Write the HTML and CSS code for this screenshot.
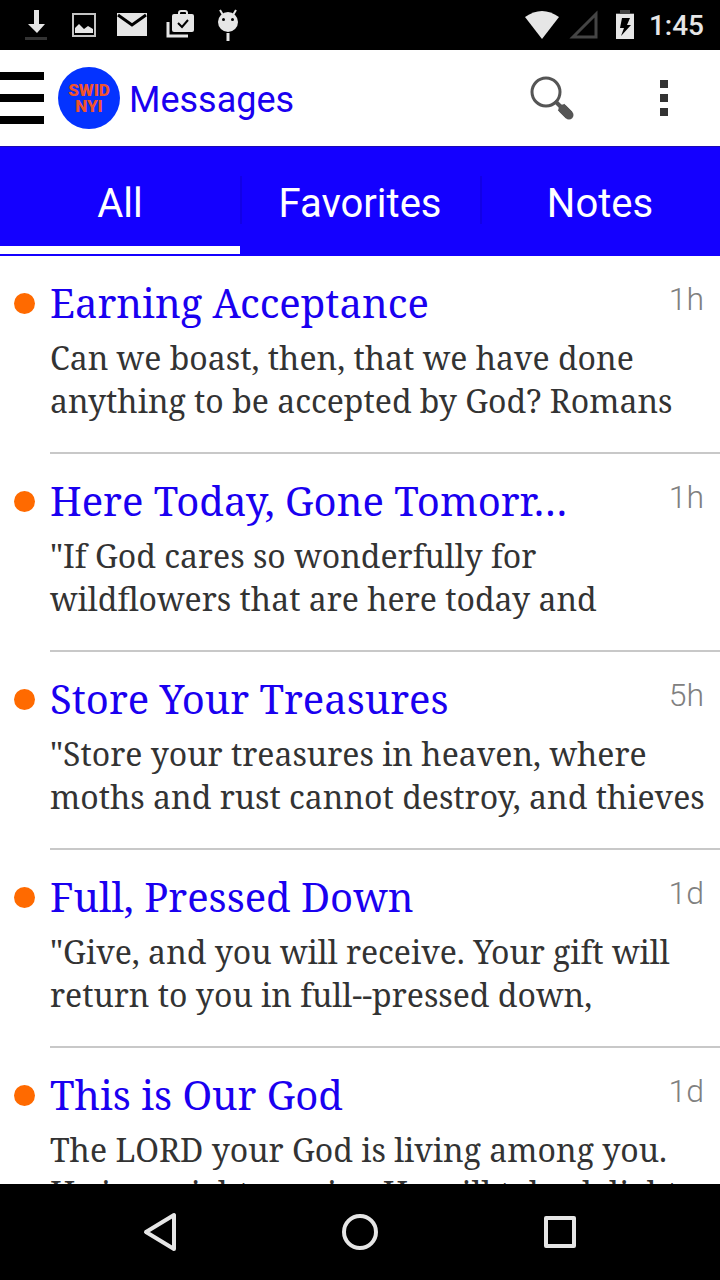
FILE: index.html
```html
<!DOCTYPE html>
<html lang="en">
<head>
  <meta charset="UTF-8">
  <meta name="viewport" content="width=device-width, initial-scale=1.0">
  <title>Messages</title>
  <link rel="stylesheet" href="styles.css">
</head>
<body>
  <div class="status-bar">
    <div class="status-icons">
      <!-- download -->
      <svg width="28" height="34" viewBox="0 0 28 34">
        <path fill="#e6e6e6" d="M10 2h5v14h6l-8 9-9-9h6z"/>
        <path fill="#333" d="M1 29h22v3H1z"/>
      </svg>
      <!-- screenshot -->
      <svg width="28" height="34" viewBox="0 0 28 34">
        <path fill="none" stroke="#c4c4c4" stroke-width="2" d="M3 6h22v22H3z"/>
        <path fill="#e6e6e6" d="M5 25v-5l4-4 5 5 4-3 5 3v4z"/>
      </svg>
      <!-- mail -->
      <svg width="32" height="34" viewBox="0 0 32 34">
        <path fill="#e6e6e6" d="M1 5h30v23H1z"/>
        <path fill="none" stroke="#000" stroke-width="3" d="M2 7l14 10L30 7"/>
      </svg>
      <!-- play store update -->
      <svg width="28" height="34" viewBox="0 0 28 34">
        <path fill="none" stroke="#e6e6e6" stroke-width="3" d="M2 14v14h20"/>
        <path fill="#e6e6e6" d="M8 6h18q2 0 2 2v14q0 2-2 2H8q-2 0-2-2V8q0-2 2-2z"/>
        <path fill="none" stroke="#e6e6e6" stroke-width="2" d="M13 7V5q0-2 2-2h4q2 0 2 2v2"/>
        <path fill="none" stroke="#000" stroke-width="2" d="M12 15l4 4 6-7"/>
      </svg>
      <!-- android debug -->
      <svg width="28" height="34" viewBox="-6 0 28 34">
        <circle fill="#e6e6e6" cx="10" cy="14" r="10"/>
        <path fill="none" stroke="#e6e6e6" stroke-width="2" d="M5 7L2 2M15 7l3-5"/>
        <path fill="none" stroke="#e6e6e6" stroke-width="3" d="M10 25v8"/>
        <circle cx="5.500" cy="11.500" r="1.500"/>
        <circle cx="14.500" cy="11.500" r="1.500"/>
      </svg>
    </div>
    <div class="status-system">
      <!-- wifi -->
      <svg width="36" height="34" viewBox="0 0 36 34">
        <path fill="#e6e6e6" d="M2 9Q19-3 36 9L19 31z"/>
      </svg>
      <!-- no signal -->
      <svg width="36" height="34" viewBox="0 0 36 34">
        <path fill="none" stroke="#444" stroke-width="3" d="M4 29L27 6v23z"/>
      </svg>
      <!-- battery -->
      <svg width="24" height="34" viewBox="0 0 24 34">
        <path fill="#444" d="M5 2h10v3h4v4H1V5h4z"/>
        <path fill="#e6e6e6" d="M1 6h18v25H1z"/>
        <path d="M7 10h8l-3 7h4L6 28l3-8H5z"/>
      </svg>
      <span class="clock">1:45</span>
    </div>
  </div>

  <header class="action-bar">
    <button class="menu-button" aria-label="Menu">
      <span></span>
      <span></span>
      <span></span>
    </button>
    <div class="logo">SWID<br>NYI</div>
    <h1>Messages</h1>
    <button class="icon-button" aria-label="Search">
      <svg width="48" height="48" viewBox="0 0 48 48">
        <circle cx="18" cy="18" r="14" fill="none" stroke="#555" stroke-width="3"/>
        <path stroke="#555" stroke-width="4" d="M27 27l6 6"/>
        <path stroke="#555" stroke-width="9" stroke-linecap="round" d="M35 35l6 6"/>
        <path stroke="#555" stroke-width="9" d="M33 33l8 8"/>
      </svg>
    </button>
    <button class="icon-button" aria-label="More options">
      <svg width="8" height="36" viewBox="0 0 8 36">
        <path fill="#333" d="M0 0h8v8H0zM0 14h8v8H0zM0 28h8v8H0z"/>
      </svg>
    </button>
  </header>

  <nav class="tabs">
    <button class="tab selected">All</button>
    <button class="tab">Favorites</button>
    <button class="tab">Notes</button>
  </nav>

  <main class="messages">
    <article class="message">
      <div class="message-header">
        <h2>Earning Acceptance</h2>
        <time>1h</time>
      </div>
      <p>Can we boast, then, that we have done<br>anything to be accepted by God? Romans</p>
    </article>
    <article class="message">
      <div class="message-header">
        <h2>Here Today, Gone Tomorr…</h2>
        <time>1h</time>
      </div>
      <p>"If God cares so wonderfully for<br>wildflowers that are here today and</p>
    </article>
    <article class="message">
      <div class="message-header">
        <h2>Store Your Treasures</h2>
        <time>5h</time>
      </div>
      <p>"Store your treasures in heaven, where<br>moths and rust cannot destroy, and thieves</p>
    </article>
    <article class="message">
      <div class="message-header">
        <h2>Full, Pressed Down</h2>
        <time>1d</time>
      </div>
      <p>"Give, and you will receive. Your gift will<br>return to you in full--pressed down,</p>
    </article>
    <article class="message">
      <div class="message-header">
        <h2>This is Our God</h2>
        <time>1d</time>
      </div>
      <p>The LORD your God is living among you.<br>He is a mighty savior. He will take delight</p>
    </article>
  </main>

  <div class="nav-bar">
    <button aria-label="Back">
      <svg width="40" height="40" viewBox="0 0 40 40">
        <path d="M34 3v34L6 20z"/>
      </svg>
    </button>
    <button aria-label="Home">
      <svg width="40" height="40" viewBox="0 0 40 40">
        <circle cx="20" cy="20" r="16"/>
      </svg>
    </button>
    <button aria-label="Recent apps">
      <svg width="40" height="40" viewBox="0 0 40 40">
        <path d="M6 6h28v28H6z"/>
      </svg>
    </button>
  </div>
</body>
</html>
```

FILE: styles.css
```css
:root {
  --blue: #1400ff;
  --title-blue: #1a00f0;
  --orange: #ff6a00;
  --icon-light: #e6e6e6;
  --serif: "Noto Serif", "Droid Serif", "DejaVu Serif Condensed", "DejaVu Serif", serif;
}

* {
  box-sizing: border-box;
}

body {
  display: flex;
  flex-direction: column;
  height: 100vh;
  margin: 0;
  background: #fff;
  font-family: Roboto, sans-serif;
}

h1, h2, p {
  margin: 0;
  font-weight: 400;
}

button {
  padding: 0;
  border: none;
  background: none;
  font-family: inherit;
  cursor: pointer;
}

svg {
  display: block;
}

/* Status bar */
.status-bar {
  display: flex;
  flex: none;
  justify-content: space-between;
  height: 50px;
  padding: 8px 16px 0 24px;
  background: #000;
}

.status-icons {
  display: flex;
  gap: 18px;
}

.status-system {
  display: flex;
  gap: 10px;
}

.clock {
  color: var(--icon-light);
  font-size: 28px;
  font-weight: 500;
  line-height: 36px;
}

/* Action bar */
.action-bar {
  display: flex;
  flex: none;
  align-items: center;
  height: 96px;
}

.menu-button {
  display: flex;
  flex-direction: column;
  gap: 14px;
  width: 44px;
  margin-right: 14px;
}

.menu-button span {
  height: 8px;
  background: #000;
}

.logo {
  width: 62px;
  height: 62px;
  padding-top: 15px;
  border-radius: 50%;
  background: #0433ff;
  color: #f0532d;
  font-size: 17px;
  font-weight: 900;
  line-height: 16px;
  text-align: center;
}

.action-bar h1 {
  flex: 1;
  padding: 4px 0 0 9px;
  color: var(--title-blue);
  font-size: 36px;
}

.icon-button {
  display: flex;
  align-items: center;
  justify-content: center;
  width: 112px;
  height: 96px;
}

/* Tabs */
.tabs {
  display: flex;
  flex: none;
  height: 110px;
  border-top: 1px solid #1c0bb4;
  border-bottom: 2px solid var(--blue);
  background: var(--blue);
}

.tab {
  flex: 1;
  padding-top: 14px;
  border-bottom: 8px solid transparent;
  color: #fff;
  font-size: 40px;
}

.tab.selected {
  border-bottom-color: #fff;
}

.tab + .tab {
  background: linear-gradient(#1200e6, #1200e6) left 29px / 2px 48px no-repeat;
}

/* Message list */
.messages {
  flex: 1;
  min-height: 0;
  padding-left: 50px;
  overflow: hidden;
}

.message {
  padding: 20px 0 30px;
  border-bottom: 2px solid #c8c8c8;
  font-family: var(--serif);
  white-space: nowrap;
}

.message-header {
  display: flex;
  align-items: center;
  margin: 0 16px 6px -36px;
}

.message-header::before {
  content: "";
  width: 21px;
  height: 21px;
  margin-right: 15px;
  border-radius: 50%;
  background: var(--orange);
}

.message h2 {
  flex: 1;
  color: var(--title-blue);
  font-size: 40px;
  line-height: 54px;
}

.message time {
  align-self: flex-start;
  color: #808080;
  font-family: Roboto, sans-serif;
  font-size: 32px;
  font-weight: 300;
  line-height: 46px;
}

.message p {
  color: #333;
  font-size: 32px;
  line-height: 43px;
}

/* Navigation bar */
.nav-bar {
  display: flex;
  flex: none;
  justify-content: center;
  height: 96px;
  background: #000;
}

.nav-bar button {
  display: flex;
  align-items: center;
  justify-content: center;
  width: 200px;
}

.nav-bar svg {
  fill: none;
  stroke: var(--icon-light);
  stroke-width: 4;
  stroke-linejoin: round;
}
```
